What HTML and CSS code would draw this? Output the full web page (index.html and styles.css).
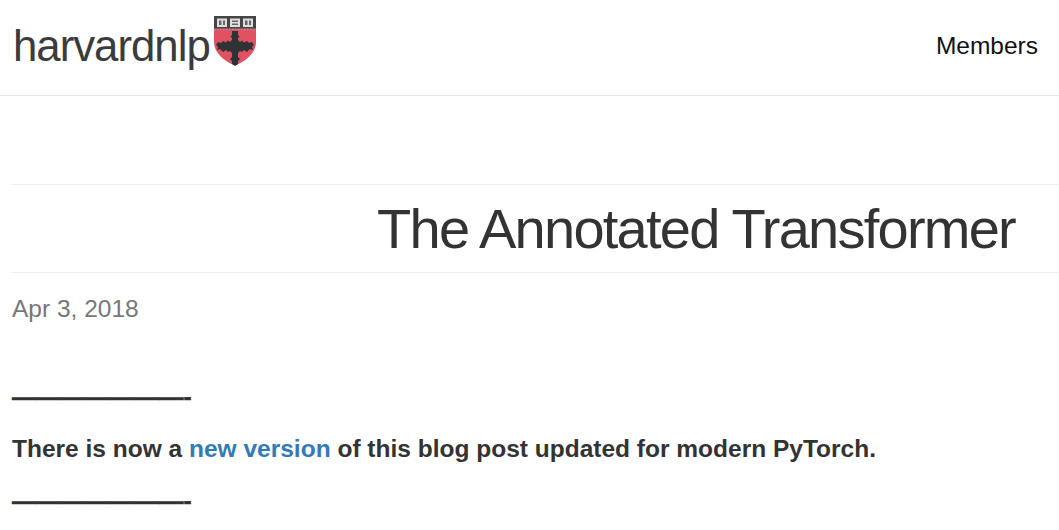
FILE: index.html
```html
<!DOCTYPE html>
<html lang="en">
<head>
  <meta charset="UTF-8">
  <meta name="viewport" content="width=device-width, initial-scale=1.0">
  <title>The Annotated Transformer</title>
  <link rel="stylesheet" href="styles.css">
</head>
<body>
  <nav class="navbar">
    <a class="brand" href="#">
      <span>harvardnlp</span>
      <svg class="shield" viewBox="0 0 42 50" width="42" height="50" aria-hidden="true">
        <path d="M0 12H42V26C42 37 32 45 21 49.500C10 45 0 37 0 26Z" fill="#e05161"/>
        <path d="M0 0H42V12.500H0Z" fill="#454545"/>
        <path d="M3 2.500H13V11H3ZM16 2.500H26V11H16ZM29 2.500H39V11H29Z" fill="#dedede"/>
        <path d="M5 4.500H7.500V9H5ZM9 4.500H11V9H9ZM18 4.500H24V6H18ZM18 7.500H24V9H18ZM31 4.500H33.500V9H31ZM35 4.500H37V9H35Z" fill="#666"/>
        <path d="M0 13.500H42" stroke="#999" stroke-width="1.500" stroke-dasharray="1.500 1.500"/>
        <path d="M18 15H24V19L25.500 20.500L24 22V24L26 26L28 24.500L30 26.500L33 25L35 27L38 26L40 29L38 31L39 34L36 33L33 36L30 34L28 36L26 35L24 37V41L26 43L24 45V48L21 50L18 48V45L16 43L18 41V37L16 35L14 36L12 34L9 36L6 33L3 34L4 31L2 29L4 26L7 27L9 25L12 26.500L14 24.500L16 26L18 24V22L16.500 20.500L18 19Z" fill="#2f3335"/>
      </svg>
    </a>
    <a class="nav-link" href="#">Members</a>
  </nav>

  <main class="content">
    <header class="post-header">
      <h1 class="post-title">The Annotated Transformer</h1>
    </header>
    <p class="post-date">Apr 3, 2018</p>
    <p class="dashes">———————-</p>
    <p class="notice">There is now a <a href="#">new version</a> of this blog post updated for modern PyTorch.</p>
    <p class="dashes">———————-</p>
  </main>
</body>
</html>
```

FILE: styles.css
```css
* {
  box-sizing: border-box;
}

html, body {
  overflow: hidden;
}

body {
  margin: 0;
  height: 530px;
  background: #fff;
  color: #333;
  font-family: "Liberation Sans", Arial, sans-serif;
  font-size: 24.5px;
  line-height: 1.43;
}

a {
  text-decoration: none;
}

.navbar {
  display: flex;
  justify-content: space-between;
  align-items: center;
  height: 96px;
  padding: 0 21px 4px 13px;
  border-bottom: 1px solid #e7e7e7;
}

.brand {
  display: flex;
  align-items: flex-start;
  color: #3b3b3b;
  font-size: 43.75px;
  letter-spacing: -1px;
  line-height: 1;
}

.shield {
  margin: -8px 0 0 4px;
}

.nav-link {
  color: #111;
}

.content {
  padding-left: 12px;
}

.post-header {
  margin-top: 88px;
  padding: 0 44px 0 0;
  height: 89px;
  border-top: 1px solid #eee;
  border-bottom: 1px solid #eee;
  text-align: right;
}

.post-title {
  margin: 0;
  font-size: 56px;
  font-weight: 400;
  letter-spacing: -1.75px;
  line-height: 87px;
}

.post-date {
  margin: 18px 0 0;
  color: #777;
}

.dashes, .notice {
  font-weight: 700;
}

.dashes {
  margin: 0;
  -webkit-text-stroke: 0.5px #333;
}

.post-date + .dashes {
  margin-top: 53px;
}

.notice {
  margin: 17px 0;
}

.notice a {
  color: #337ab7;
}
```
